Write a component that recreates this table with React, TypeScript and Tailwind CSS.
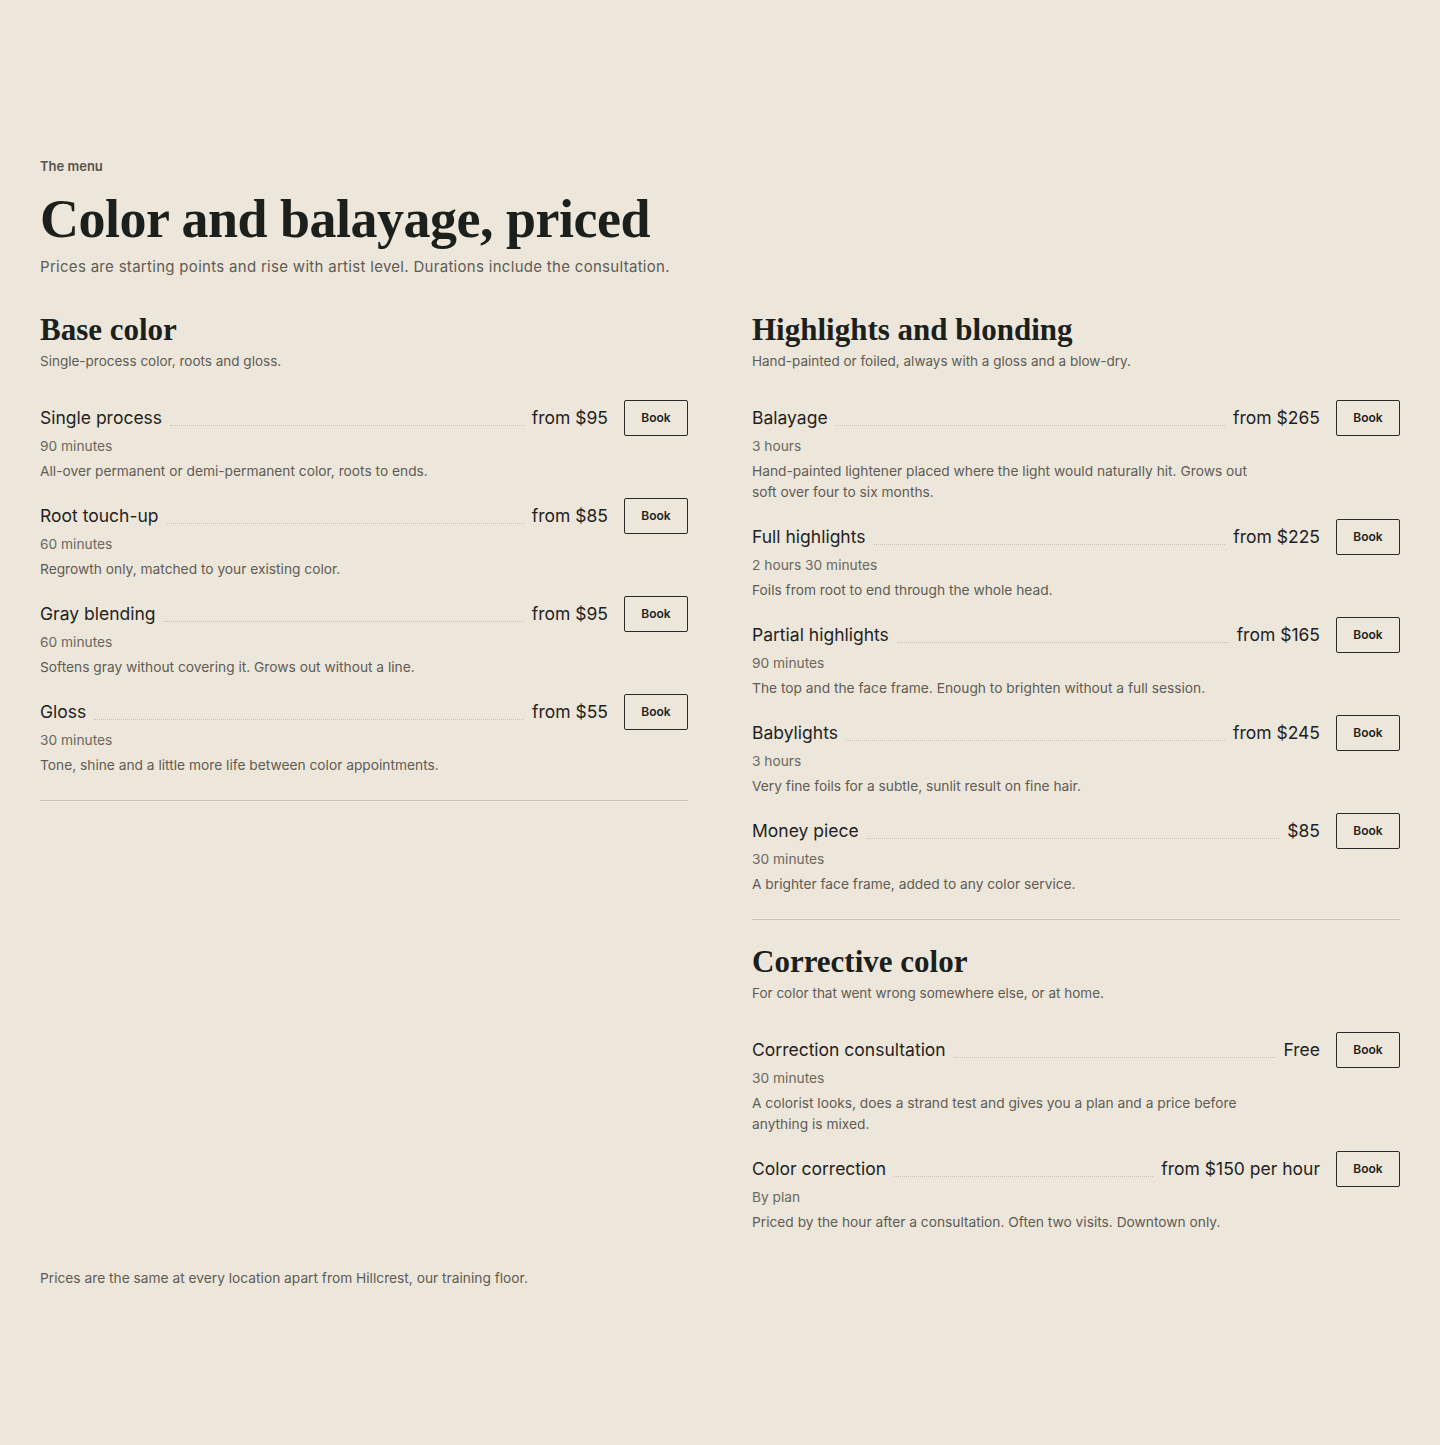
import React from "react";

type Service = {
  name: string;
  price: string;
  duration: string;
  description: string;
};

type Section = {
  title: string;
  blurb: string;
  services: Service[];
  divider: boolean;
};

const baseColor: Section = {
  title: "Base color",
  blurb: "Single-process color, roots and gloss.",
  divider: true,
  services: [
    {
      name: "Single process",
      price: "from $95",
      duration: "90 minutes",
      description: "All-over permanent or demi-permanent color, roots to ends.",
    },
    {
      name: "Root touch-up",
      price: "from $85",
      duration: "60 minutes",
      description: "Regrowth only, matched to your existing color.",
    },
    {
      name: "Gray blending",
      price: "from $95",
      duration: "60 minutes",
      description: "Softens gray without covering it. Grows out without a line.",
    },
    {
      name: "Gloss",
      price: "from $55",
      duration: "30 minutes",
      description: "Tone, shine and a little more life between color appointments.",
    },
  ],
};

const highlights: Section = {
  title: "Highlights and blonding",
  blurb: "Hand-painted or foiled, always with a gloss and a blow-dry.",
  divider: true,
  services: [
    {
      name: "Balayage",
      price: "from $265",
      duration: "3 hours",
      description:
        "Hand-painted lightener placed where the light would naturally hit. Grows out soft over four to six months.",
    },
    {
      name: "Full highlights",
      price: "from $225",
      duration: "2 hours 30 minutes",
      description: "Foils from root to end through the whole head.",
    },
    {
      name: "Partial highlights",
      price: "from $165",
      duration: "90 minutes",
      description: "The top and the face frame. Enough to brighten without a full session.",
    },
    {
      name: "Babylights",
      price: "from $245",
      duration: "3 hours",
      description: "Very fine foils for a subtle, sunlit result on fine hair.",
    },
    {
      name: "Money piece",
      price: "$85",
      duration: "30 minutes",
      description: "A brighter face frame, added to any color service.",
    },
  ],
};

const corrective: Section = {
  title: "Corrective color",
  blurb: "For color that went wrong somewhere else, or at home.",
  divider: false,
  services: [
    {
      name: "Correction consultation",
      price: "Free",
      duration: "30 minutes",
      description:
        "A colorist looks, does a strand test and gives you a plan and a price before anything is mixed.",
    },
    {
      name: "Color correction",
      price: "from $150 per hour",
      duration: "By plan",
      description: "Priced by the hour after a consultation. Often two visits. Downtown only.",
    },
  ],
};

const ServiceRow = ({ service }: { service: Service }) => (
  <li>
    <div className="flex h-9 items-center gap-4">
      <div className="flex flex-1 items-baseline gap-2">
        <span className="text-[17.5px] text-[#1e231f]">{service.name}</span>
        <span className="relative top-[2px] flex-1 border-b border-dotted border-[#c8c1b3]" />
        <span className="text-[17.5px] text-[#1e231f]">{service.price}</span>
      </div>
      <button
        type="button"
        className="h-9 w-16 rounded-[2px] border border-[#2a2b26] text-[12px] font-semibold text-[#1e231f]"
      >
        Book
      </button>
    </div>
    <p className="text-[13.75px] leading-5 text-[#6a685f]">{service.duration}</p>
    <p className="mt-[5px] max-w-[500px] text-[13.75px] leading-[21px] text-[#5e5c55]">
      {service.description}
    </p>
  </li>
);

const MenuSection = ({ section }: { section: Section }) => (
  <section className={section.divider ? "border-b border-[#cbc4b6] pb-6" : ""}>
    <h2 className="font-['Liberation_Serif',serif] text-[31px] font-bold leading-9 text-[#1b201c]">
      {section.title}
    </h2>
    <p className="mt-[3px] text-[13.5px] leading-5 text-[#5e5c55]">{section.blurb}</p>
    <ul className="mt-[29px] space-y-4">
      {section.services.map((s) => (
        <ServiceRow key={s.name} service={s} />
      ))}
    </ul>
  </section>
);

export default function App() {
  return (
    <div className="min-h-[1445px] bg-[#ede6da] px-10 pt-[156px] font-['Inter',sans-serif]">
      <p className="text-[13px] font-semibold leading-5 text-[#55544d]">The menu</p>
      <h1 className="mt-[14px] font-['Liberation_Serif',serif] text-[54px] font-bold leading-[1.1] tracking-[-0.5px] text-[#1b201c]">
        Color and balayage, priced
      </h1>
      <p className="mt-[6px] text-[15px] leading-6 tracking-[0.3px] text-[#5e5c55]">
        Prices are starting points and rise with artist level. Durations include the
        consultation.
      </p>

      <div className="mt-[33px] grid grid-cols-2 items-start gap-x-16">
        <MenuSection section={baseColor} />
        <div className="space-y-6">
          <MenuSection section={highlights} />
          <MenuSection section={corrective} />
        </div>
      </div>

      <p className="mt-[35px] text-[13.75px] leading-5 text-[#5e5c55]">
        Prices are the same at every location apart from Hillcrest, our training floor.
      </p>
    </div>
  );
}
